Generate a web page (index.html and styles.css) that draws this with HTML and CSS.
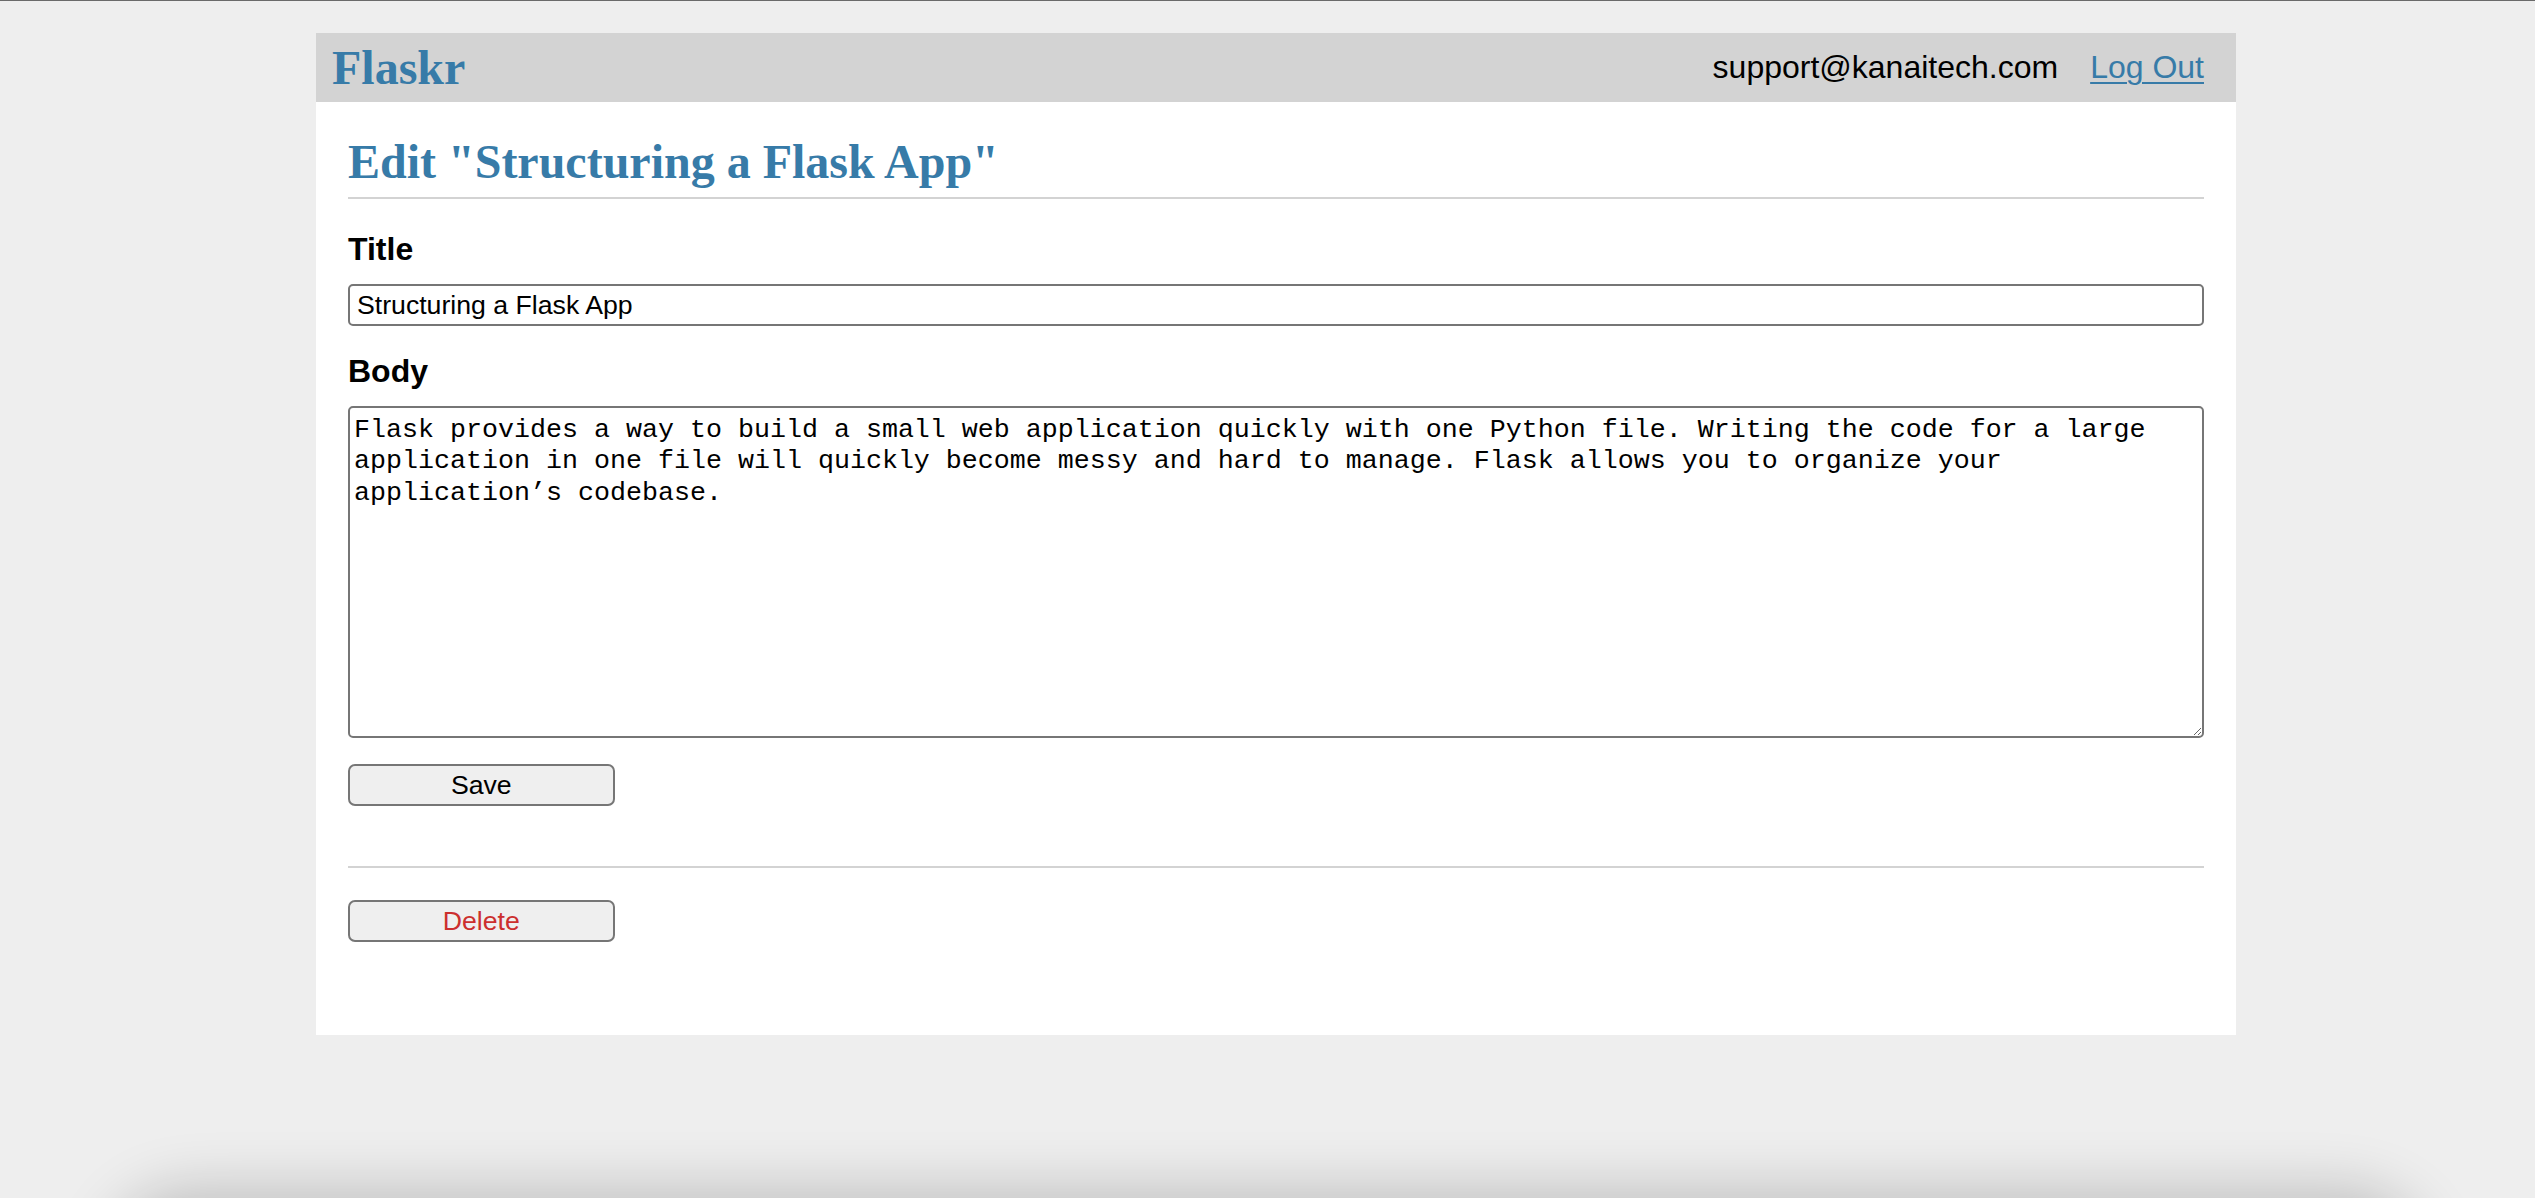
FILE: index.html
```html
<!DOCTYPE html>
<html lang="en">
<head>
<meta charset="utf-8">
<title>Edit "Structuring a Flask App" - Flaskr</title>
<link rel="stylesheet" href="styles.css">
</head>
<body>
<nav class="nav">
  <h1 class="brand"><a href="#">Flaskr</a></h1>
  <ul class="nav-list">
    <li><span class="nav-item">support@kanaitech.com</span></li>
    <li><a class="nav-item nav-link" href="#">Log Out</a></li>
  </ul>
</nav>
<section class="content">
  <header class="content-header">
    <h1 class="page-title">Edit "Structuring a Flask App"</h1>
  </header>
  <form class="form">
    <label class="label" for="title">Title</label>
    <input class="text-input" name="title" id="title" value="Structuring a Flask App">
    <label class="label" for="body">Body</label>
    <textarea class="text-area" name="body" id="body">Flask provides a way to build a small web application quickly with one Python file. Writing the code for a large application in one file will quickly become messy and hard to manage. Flask allows you to organize your application’s codebase.</textarea>
    <input class="button" type="submit" value="Save">
  </form>
  <hr class="rule">
  <form class="form">
    <input class="button danger" type="submit" value="Delete">
  </form>
</section>
<div class="window-shadow"></div>
</body>
</html>
```

FILE: styles.css
```css
html {
  font-family: "Liberation Sans", Arial, sans-serif;
  font-size: 32px;
  background: #eeeeee;
  margin: 0;
  padding: 32px 0;
  border-top: 1px solid #6a6a6a;
  min-height: 1100px;
  overflow: hidden;
}

body {
  width: 1920px;
  margin: 0 0 0 316px;
  background: #ffffff;
  position: relative;
  z-index: 1;
}

a {
  color: #377ba8;
}

.nav {
  background: #d3d3d3;
  display: flex;
  align-items: center;
  padding: 0 16px;
}

.brand {
  flex: auto;
  margin: 0;
  font-family: "Liberation Serif", "Times New Roman", serif;
  font-size: 48px;
  font-weight: bold;
  line-height: 55px;
  color: #377ba8;
}

.brand a {
  text-decoration: none;
}

.nav-list {
  display: flex;
  list-style: none;
  margin: 0;
  padding: 0;
}

.nav-item {
  display: block;
  padding: 16px;
  font-size: 32px;
  line-height: 37px;
  color: #000;
}

.nav-link {
  color: #377ba8;
  text-decoration: underline;
  text-underline-offset: 4px;
  text-decoration-thickness: 2px;
}

.content {
  padding: 0 32px 33px;
}

.content-header {
  border-bottom: 2px solid #d3d3d3;
  display: flex;
  align-items: flex-end;
}

.page-title {
  flex: auto;
  margin: 32px 0 8px 0;
  font-family: "Liberation Serif", "Times New Roman", serif;
  font-size: 48px;
  font-weight: bold;
  line-height: 55px;
  color: #377ba8;
}

.form {
  margin: 32px 0;
  display: flex;
  flex-direction: column;
}

.label {
  font-weight: bold;
  font-size: 32px;
  line-height: 37px;
  margin-bottom: 16px;
}

.text-input {
  box-sizing: border-box;
  height: 42px;
  margin: 0 0 26.67px 0;
  padding: 0 7px;
  border: 2px solid #767676;
  border-radius: 5px;
  font-family: "Liberation Sans", Arial, sans-serif;
  font-size: 26.67px;
  color: #000;
  background: #fff;
}

.text-area {
  box-sizing: border-box;
  height: 332px;
  margin: 0 0 26.67px 0;
  padding: 7px 4px 4px;
  border: 2px solid #767676;
  border-radius: 5px;
  font-family: "Liberation Mono", "Courier New", monospace;
  font-size: 26.67px;
  line-height: 31.5px;
  color: #000;
  background: #fff;
  resize: vertical;
}

.button {
  align-self: start;
  box-sizing: border-box;
  min-width: 266.67px;
  height: 42px;
  margin: 0 0 28px 0;
  padding: 0 12px;
  border: 2px solid #767676;
  border-radius: 7px;
  background: #efefef;
  font-family: "Liberation Sans", Arial, sans-serif;
  font-size: 26.67px;
  color: #000;
}

.danger {
  color: #cc2f2e;
}

.rule {
  border: none;
  border-top: 2px solid #d3d3d3;
  margin: 16px 0;
}

.window-shadow {
  position: fixed;
  left: 130px;
  right: 130px;
  top: 1215px;
  height: 200px;
  border-radius: 60px;
  box-shadow: 0 0 60px 25px rgba(0, 0, 0, 0.2);
  z-index: 0;
}
```
